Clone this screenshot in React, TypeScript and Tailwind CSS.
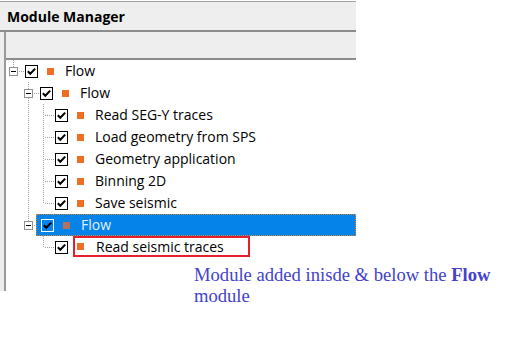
import React from "react";

type Row = {
  level: number;
  label: string;
  exp?: boolean;
  bottom: boolean;
  anc: boolean[];
  selected?: boolean;
  boxed?: boolean;
};

const rows: Row[] = [
  { level: 0, label: "Flow", exp: true, bottom: false, anc: [] },
  { level: 1, label: "Flow", exp: true, bottom: true, anc: [false] },
  { level: 2, label: "Read SEG-Y traces", bottom: true, anc: [false, true] },
  { level: 2, label: "Load geometry from SPS", bottom: true, anc: [false, true] },
  { level: 2, label: "Geometry application", bottom: true, anc: [false, true] },
  { level: 2, label: "Binning 2D", bottom: true, anc: [false, true] },
  { level: 2, label: "Save seismic", bottom: false, anc: [false, true] },
  { level: 1, label: "Flow", exp: true, bottom: false, anc: [false], selected: true },
  { level: 2, label: "Read seismic traces", bottom: false, anc: [false, false], boxed: true },
];

const DOT = "#a0a0a0";

function AncestorCol({ through }: { through: boolean }) {
  return (
    <svg width="15" height="22" className="shrink-0 block" shapeRendering="crispEdges">
      {through && (
        <line x1="7.5" y1="0" x2="7.5" y2="22" stroke={DOT} strokeWidth="1" strokeDasharray="1 1" />
      )}
    </svg>
  );
}

function OwnCol({ exp, bottom }: { exp?: boolean; bottom: boolean }) {
  return (
    <svg
      width="15"
      height="22"
      className="shrink-0 block"
      shapeRendering="crispEdges"
      style={{ overflow: "visible" }}
    >
      <line x1="7.5" y1="0" x2="7.5" y2={exp ? 7 : 11} stroke={DOT} strokeWidth="1" strokeDasharray="1 1" />
      {bottom && (
        <line x1="7.5" y1={exp ? 16 : 12} x2="7.5" y2="22" stroke={DOT} strokeWidth="1" strokeDasharray="1 1" />
      )}
      <line x1={exp ? 13 : 9} y1="11.5" x2="18" y2="11.5" stroke={DOT} strokeWidth="1" strokeDasharray="1 1" />
      {exp && (
        <>
          <rect x="3.5" y="7.5" width="8" height="8" fill="#ffffff" stroke="#919191" strokeWidth="1" />
          <line x1="5" y1="11.5" x2="10" y2="11.5" stroke="#000000" strokeWidth="1" />
        </>
      )}
    </svg>
  );
}

function Checkbox({ selected }: { selected?: boolean }) {
  return (
    <svg width="13" height="13" className="shrink-0 block" shapeRendering="crispEdges">
      <rect
        x="0.5"
        y="0.5"
        width="12"
        height="12"
        fill={selected ? "#0583e8" : "#ffffff"}
        stroke={selected ? "#ffffff" : "#000000"}
        strokeWidth="1"
      />
      <polyline
        points="2.8,6.2 5.3,8.8 10.2,3.6"
        fill="none"
        stroke="#000000"
        strokeWidth="2"
        shapeRendering="geometricPrecision"
      />
    </svg>
  );
}

function TreeRow({ row }: { row: Row }) {
  const square = (
    <span className={`block w-[7px] h-[7px] shrink-0 ${row.selected ? "bg-[#b3715f]" : "bg-[#ee6e22]"}`} />
  );
  return (
    <div className="flex h-[22px] items-stretch">
      {row.anc.map((t, i) => (
        <AncestorCol key={i} through={t} />
      ))}
      <OwnCol exp={row.exp} bottom={row.bottom} />
      <div
        className={`flex flex-1 items-center pl-[4px] ${
          row.selected ? "bg-[#0583e8] border border-dotted border-[#d9823a] pl-[3px]" : ""
        }`}
      >
        <Checkbox selected={row.selected} />
        {row.boxed ? (
          <div className="ml-[5px] flex items-center w-[177px] h-[21px] self-start border-2 border-[#e3202b] pl-[2px]">
            {square}
            <span className="ml-[12px] text-[14px] leading-none text-black whitespace-nowrap">{row.label}</span>
          </div>
        ) : (
          <>
            <span className="ml-[9px]">{square}</span>
            <span
              className={`ml-[11px] text-[14px] leading-none whitespace-nowrap ${
                row.selected ? "text-[#e2f0ff]" : "text-black"
              }`}
            >
              {row.label}
            </span>
          </>
        )}
      </div>
    </div>
  );
}

export default function App() {
  return (
    <div
      className="relative w-[516px] h-[351px] bg-white overflow-hidden"
      style={{ fontFamily: '"Open Sans", "Noto Sans", sans-serif' }}
    >
      <div className="w-[356px] pt-px">
        <div className="h-[28px] border-t border-[#a0a0a0] bg-[#eeeeee] border-b-2 border-b-[#8c8c8c] box-content flex items-center pl-[7px]">
          <span className="text-[14px] font-bold text-black leading-none mt-[1px]">Module Manager</span>
        </div>
        <div className="flex h-[259px] bg-[#eeeeee]">
          <div className="w-[4px] shrink-0" />
          <div className="flex-1 border-l-2 border-[#9a9a9a] bg-white flex flex-col">
            <div className="h-[26px] bg-[#eeeeee] border-b-2 border-[#8c8c8c] box-content" />
            <div className="flex flex-col">
              {rows.map((r, i) => (
                <TreeRow key={i} row={r} />
              ))}
            </div>
          </div>
        </div>
      </div>
      <div
        className="absolute left-[194px] top-[264px] text-[18.6px] leading-[21px] text-[#4242cc]"
        style={{ fontFamily: '"Liberation Serif", "Times New Roman", serif' }}
      >
        Module added inisde &amp; below the <b>Flow</b>
        <br />
        module
      </div>
    </div>
  );
}
